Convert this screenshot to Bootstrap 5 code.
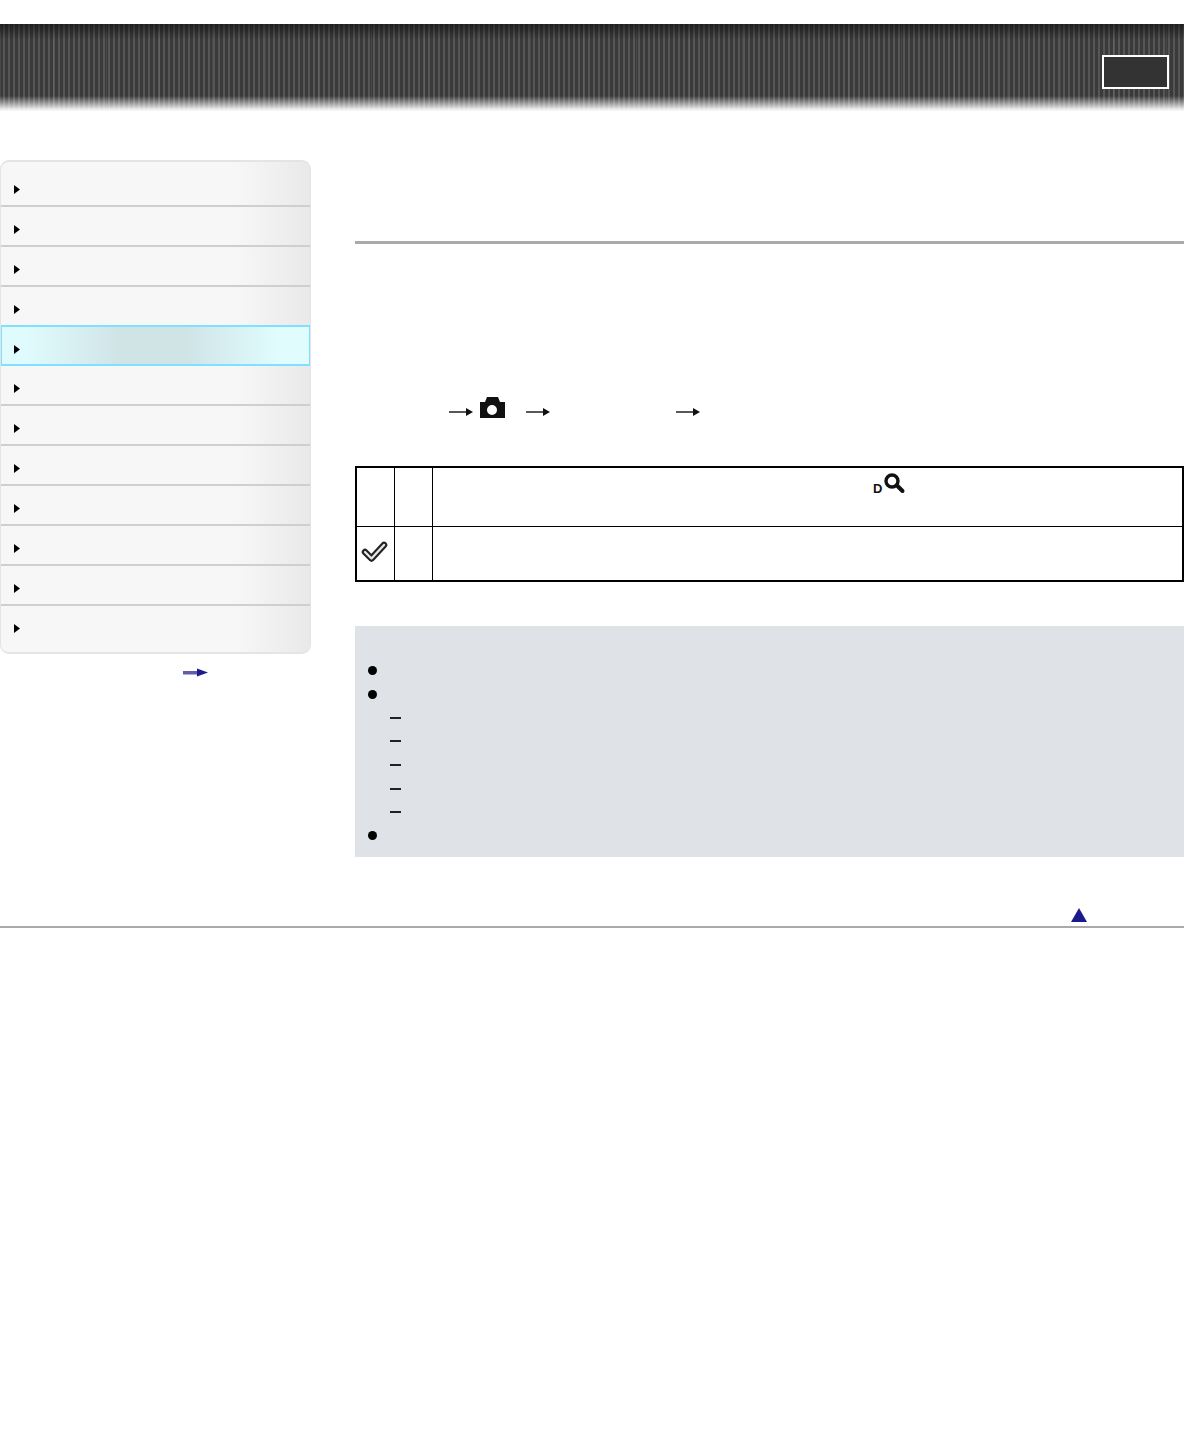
<!DOCTYPE html>
<html lang="en">
<head>
  <meta charset="UTF-8" />
  <title>Help Guide</title>
  <link href="https://cdn.jsdelivr.net/npm/bootstrap@5.3.0/dist/css/bootstrap.min.css" rel="stylesheet" />
  <style>
    body {
      background: #fff;
      font-family: "Liberation Sans", Arial, sans-serif;
      font-size: 14px;
    }

    .top-band {
      margin-top: 24px;
      height: 87px;
      padding: 31px 15px 0 0;
      background:
        linear-gradient(180deg, rgba(0,0,0,.5) 0, rgba(0,0,0,0) 16px, rgba(255,255,255,0) 72px, rgba(255,255,255,.95) 86px),
        repeating-linear-gradient(90deg, rgba(255,255,255,.07) 0 1px, rgba(255,255,255,0) 1px 53px),
        repeating-linear-gradient(90deg, #3a3a3a 0 3px, #565656 3px 5px);
    }

    .top-btn {
      width: 67px;
      height: 34px;
      border: 2px solid #fff;
      background: #333;
      padding: 0;
    }

    .page-wrap {
      padding-top: 49px;
    }

    .side-col {
      width: 311px;
      flex: 0 0 311px;
    }

    .side-menu {
      border: 1px solid #e4e4e4;
      border-width: 2px 1px;
      border-radius: 9px;
      overflow: hidden;
      height: 494px;
      background: linear-gradient(90deg, #f7f7f7 76%, #e9e9e9 100%);
    }

    .side-item {
      height: 40px;
      padding-left: 13px;
      padding-top: 6px;
      border-bottom: 2px solid #cfcfcf;
      background: transparent;
    }

    .side-item:first-child {
      height: 45px;
      padding-top: 11px;
    }

    .side-item:last-child {
      border-bottom: 0;
      height: 47px;
      padding-top: 0;
      padding-bottom: 2px;
    }

    .side-item.is-current {
      height: 41px;
      margin-top: -2px;
      padding-top: 7px;
      border: 2px solid #80e0ff;
      border-left-width: 1px;
      border-right-width: 1px;
      padding-left: 12px;
      background: linear-gradient(90deg, #e0fbfd 8%, #d0e4e6 38%, #d0e4e6 60%, #e0fcfd 90%);
    }

    .tri-mark {
      display: block;
      width: 6px;
      height: 9px;
    }

    .more-link {
      height: 23px;
      padding-left: 183px;
    }

    .main-col {
      margin-left: 44px;
      min-width: 0;
    }

    .title-rule {
      height: 3px;
      margin: 81px 0 0;
      background: #aaa;
    }

    .step-line {
      height: 34px;
      margin-top: 151px;
      padding-left: 94px;
    }

    .step-cam {
      margin-left: 6px;
      margin-bottom: 10px;
    }

    .step-gap-a {
      margin-left: 21px;
    }

    .step-gap-b {
      margin-left: 125px;
    }

    .spec-table {
      width: 100%;
      margin-top: 37px;
      border-collapse: collapse;
      border: 2px solid #000;
      table-layout: fixed;
    }

    .spec-table td {
      border: 1px solid #000;
      padding: 0;
      vertical-align: middle;
    }

    .spec-table .col-narrow {
      width: 38px;
    }

    .row-first {
      height: 59px;
    }

    .row-second {
      height: 55px;
    }

    .scope-icon {
      margin: 5px 0 0 440px;
    }

    .note-box {
      height: 231px;
      margin-top: 44px;
      padding: 32px 0 0 13px;
      background: #dfe2e6;
    }

    .note-row {
      height: 24px;
    }

    .note-dot {
      width: 9px;
      height: 9px;
      border-radius: 50%;
      background: #000;
    }

    .note-sub {
      height: 23.6px;
      padding-left: 22px;
    }

    .note-dash {
      width: 11px;
      height: 2px;
      background: #222;
    }

    .back-top {
      height: 18px;
      margin-top: 51px;
      padding-left: 716px;
    }

    .foot-rule {
      height: 2px;
      background: #aaa;
    }
  </style>
</head>
<body>

  <div class="top-band d-flex justify-content-end">
    <button type="button" class="top-btn" aria-label="Print"></button>
  </div>

  <div class="page-wrap d-flex">
    <div class="side-col">
      <ul class="side-menu list-unstyled mb-0" id="sideMenu"></ul>
      <div class="more-link d-flex align-items-end">
        <svg width="26" height="9" viewBox="0 0 26 9">
          <rect x="0" y="3" width="17" height="3.5" fill="#5f5fa8" />
          <path d="M14 0.5 L25 4.5 L14 8.5 Z" fill="#1c1c8c" />
        </svg>
      </div>
    </div>

    <div class="main-col flex-grow-1">
      <div class="title-rule"></div>

      <div class="step-line d-flex align-items-center">
        <svg width="25" height="10" viewBox="0 0 25 10"><path d="M0 5 H18" stroke="#111" stroke-width="1.4" /><path d="M17 1 L24 5 L17 9 Z" fill="#111" /></svg>
        <svg class="step-cam" width="25" height="23" viewBox="0 0 25 23">
          <path fill-rule="evenodd" fill="#111" d="M0 6 H5 L7 1 H18 L20 6 H25 V22 H0 Z M12 9 A5 5 0 1 0 12 19 A5 5 0 1 0 12 9 Z" />
        </svg>
        <svg class="step-gap-a" width="25" height="10" viewBox="0 0 25 10"><path d="M0 5 H18" stroke="#111" stroke-width="1.4" /><path d="M17 1 L24 5 L17 9 Z" fill="#111" /></svg>
        <svg class="step-gap-b" width="25" height="10" viewBox="0 0 25 10"><path d="M0 5 H18" stroke="#111" stroke-width="1.4" /><path d="M17 1 L24 5 L17 9 Z" fill="#111" /></svg>
      </div>

      <table class="spec-table">
        <colgroup><col class="col-narrow" /><col class="col-narrow" /><col /></colgroup>
        <tr class="row-first">
          <td></td>
          <td></td>
          <td class="align-top">
            <svg class="scope-icon d-block" width="33" height="23" viewBox="0 0 33 23">
              <text x="0" y="20" font-family="Liberation Sans, Arial, sans-serif" font-size="13" font-weight="700" fill="#111">D</text>
              <circle cx="19" cy="8" r="6" fill="none" stroke="#111" stroke-width="3.4" />
              <path d="M24 12.5 L29.5 18" stroke="#111" stroke-width="4" stroke-linecap="round" />
            </svg>
          </td>
        </tr>
        <tr class="row-second">
          <td class="text-center">
            <svg class="d-block mx-auto" width="28" height="24" viewBox="0 0 28 24">
              <path d="M4 11 L10.5 17.5 L23 4" fill="none" stroke="#222" stroke-width="6.5" stroke-linejoin="round" stroke-linecap="round" />
              <path d="M4 11 L10.5 17.5 L23 4" fill="none" stroke="#e4e4e4" stroke-width="2.4" stroke-linejoin="round" stroke-linecap="round" />
            </svg>
          </td>
          <td></td>
          <td></td>
        </tr>
      </table>

      <div class="note-box">
        <div class="note-row d-flex align-items-center"><span class="note-dot"></span></div>
        <div class="note-row d-flex align-items-center"><span class="note-dot"></span></div>
        <div class="note-sub d-flex align-items-center"><span class="note-dash"></span></div>
        <div class="note-sub d-flex align-items-center"><span class="note-dash"></span></div>
        <div class="note-sub d-flex align-items-center"><span class="note-dash"></span></div>
        <div class="note-sub d-flex align-items-center"><span class="note-dash"></span></div>
        <div class="note-sub d-flex align-items-center"><span class="note-dash"></span></div>
        <div class="note-row d-flex align-items-center"><span class="note-dot"></span></div>
      </div>

      <div class="back-top">
        <svg class="d-block" width="16" height="14" viewBox="0 0 16 14"><path d="M8 0 L16 14 H0 Z" fill="#1a1a8c" /></svg>
      </div>
    </div>
  </div>
  <div class="foot-rule"></div>

  <script src="https://cdn.jsdelivr.net/npm/bootstrap@5.3.0/dist/js/bootstrap.bundle.min.js"></script>
  <script>
    const menu = document.getElementById('sideMenu');
    for (let i = 0; i < 12; i++) {
      const li = document.createElement('li');
      li.className = 'side-item d-flex align-items-center' + (i === 4 ? ' is-current' : '');
      li.innerHTML = '<svg class="tri-mark" viewBox="0 0 6 9"><path d="M0 0 L6 4.5 L0 9 Z" fill="#000" /></svg>';
      menu.appendChild(li);
    }
  </script>
</body>
</html>
